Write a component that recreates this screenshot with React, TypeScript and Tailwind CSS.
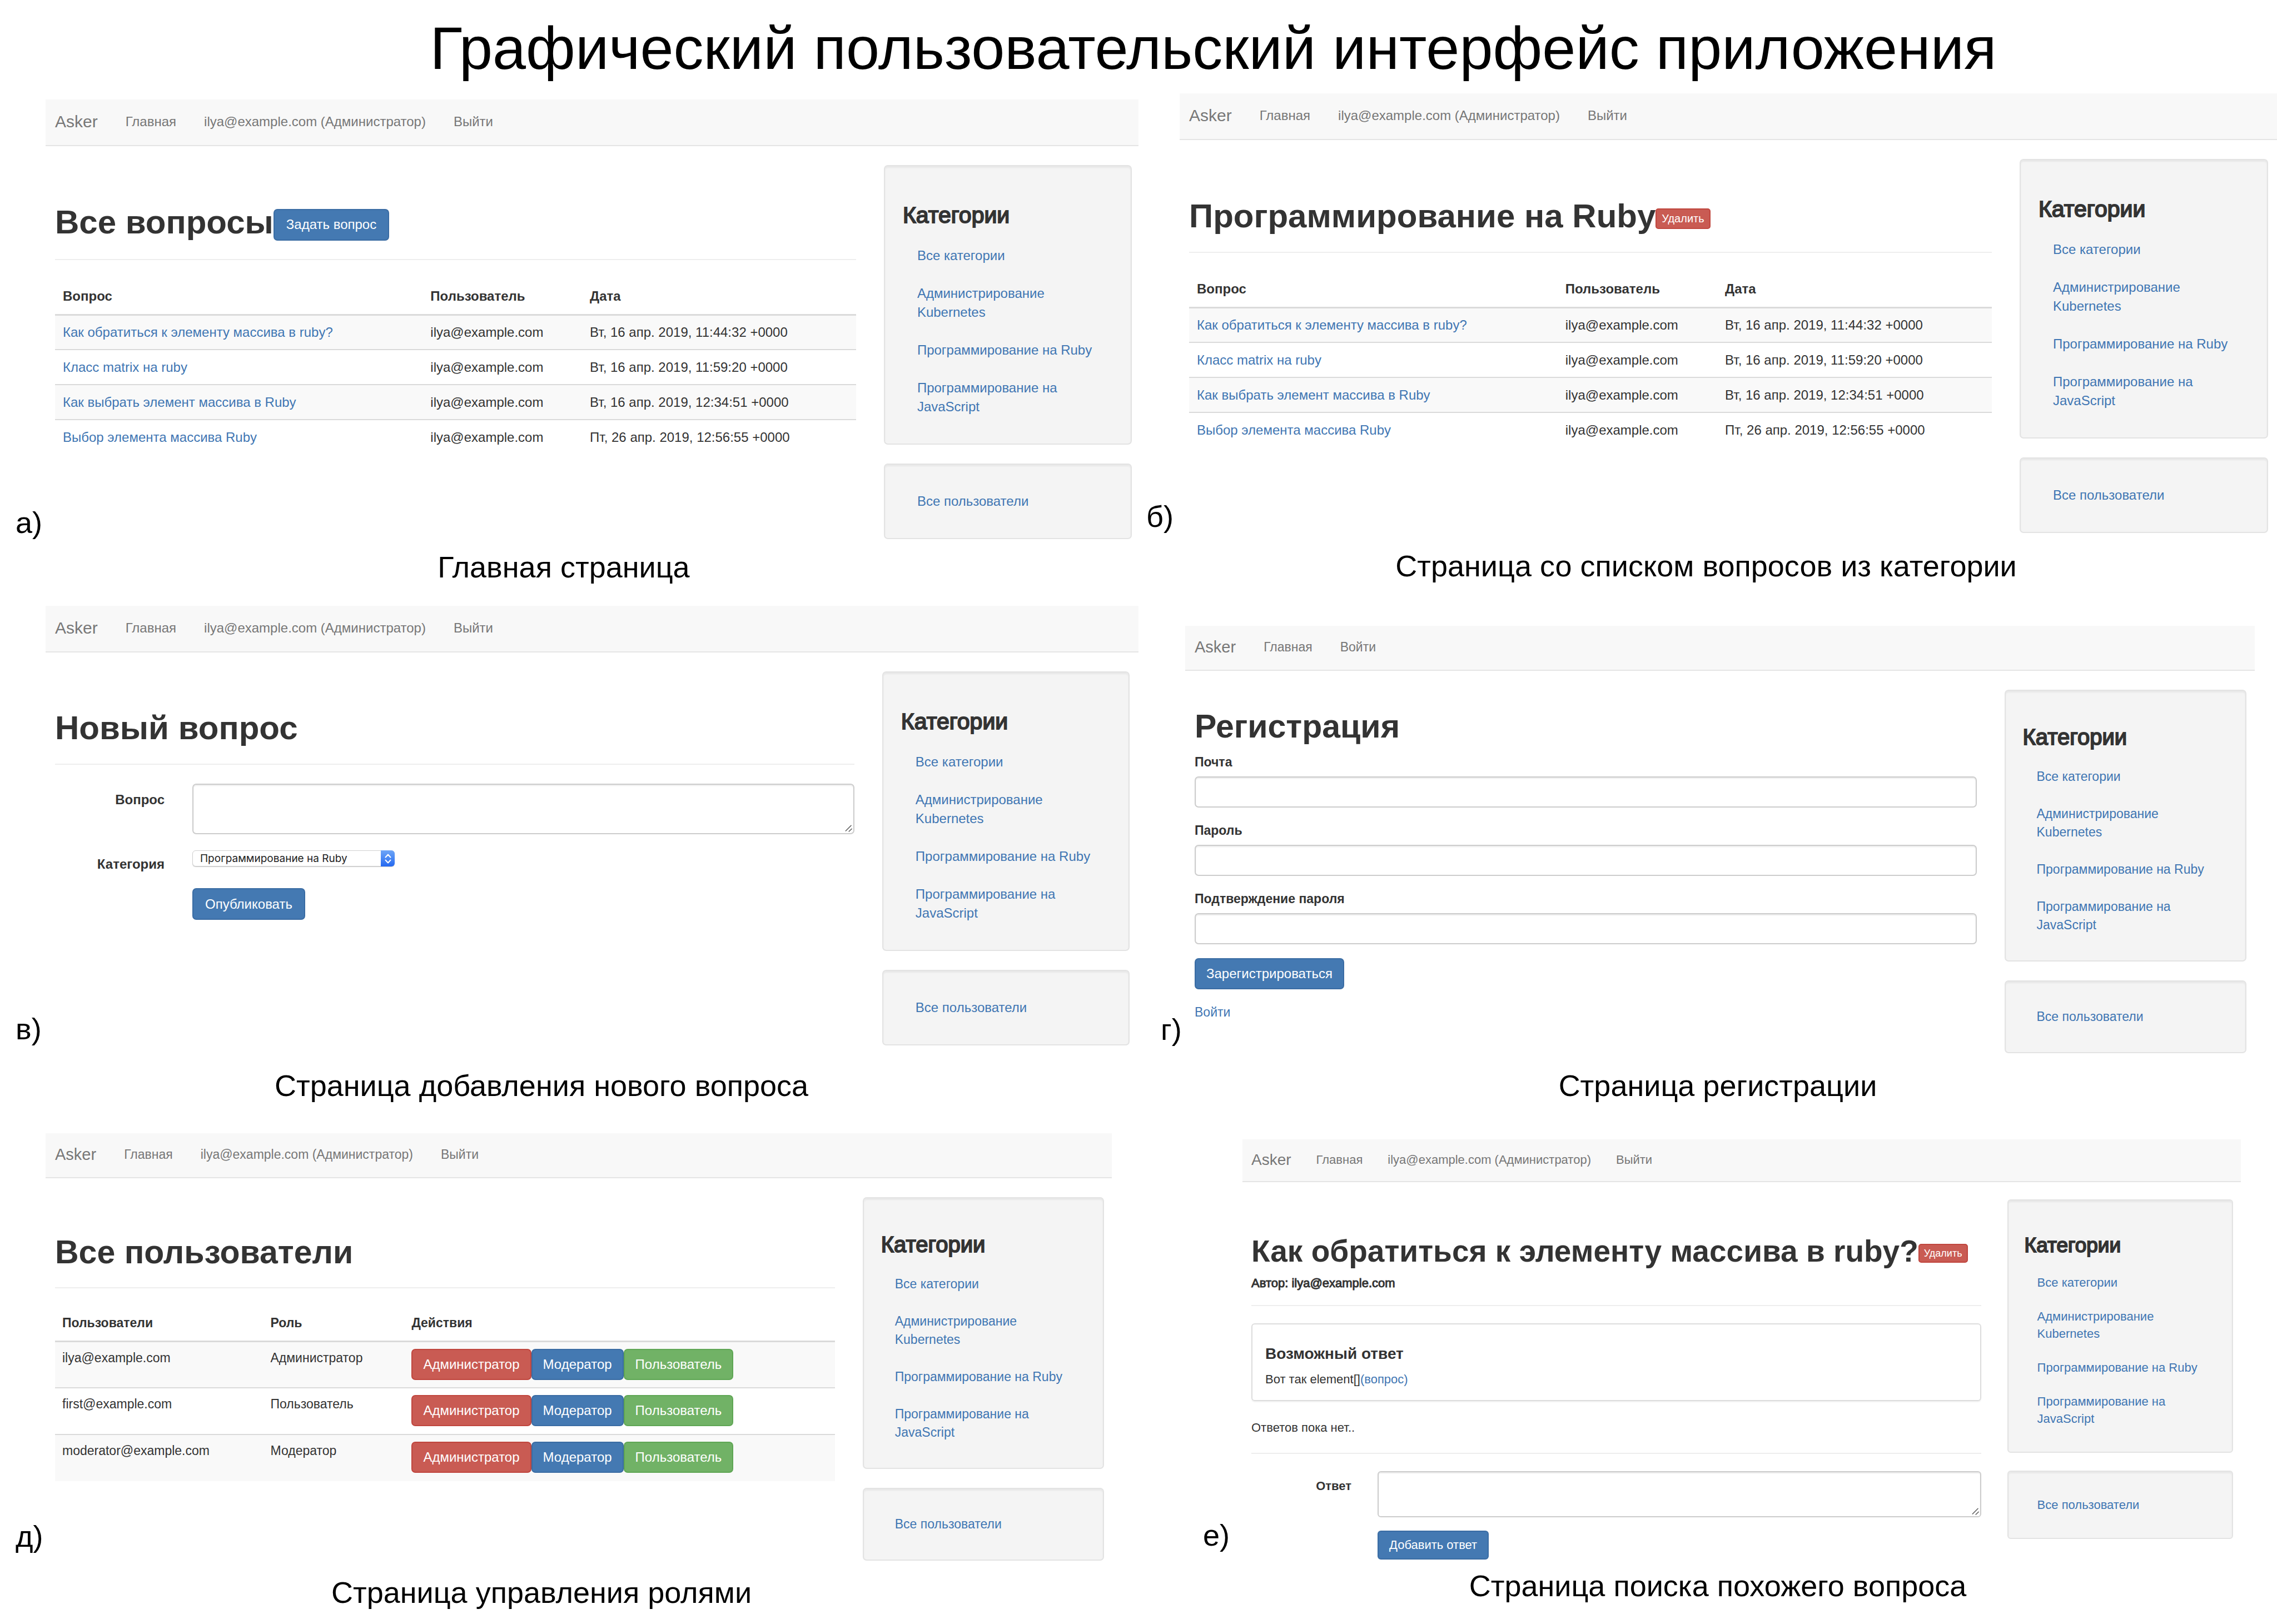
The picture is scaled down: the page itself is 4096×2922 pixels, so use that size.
import React, { createContext, useContext, useId } from "react";

type Size = "lg" | "md" | "sm";

const sizes = {
  lg: {
    panel: "text-[24px] leading-[34px]",
    nav: "h-[84px] gap-[50px] pl-[17px] pb-[2px]",
    brand: "text-[30px]",
    body: "mt-[34px] gap-[50px] pl-[17px]",
    side: "gap-[34px]",
    well: "p-[32px] rounded-[7px]",
    sideTitle: "mt-[34px] mb-[16px] text-[41px] leading-[45px]",
    sideLink: "px-[26px] py-[17px]",
    h1: "text-[60px] leading-[68px]",
    btn: "h-[57px] px-[21px] rounded-[7px] text-[24px]",
    btnSm: "h-[37px] px-[9px] rounded-[5px] text-[20px]",
    field: "rounded-[7px]",
  },
  md: {
    panel: "text-[23px] leading-[33px]",
    nav: "h-[81px] gap-[50px] pl-[17px] pb-[2px]",
    brand: "text-[29px]",
    body: "mt-[34px] gap-[50px] pl-[17px]",
    side: "gap-[34px]",
    well: "px-[31px] py-[30px] rounded-[7px]",
    sideTitle: "mt-[32px] mb-[16px] text-[40px] leading-[43px]",
    sideLink: "px-[25px] py-[17px]",
    h1: "text-[59px] leading-[66px]",
    btn: "h-[56px] px-[19px] rounded-[7px] text-[24px]",
    btnSm: "h-[36px] px-[8px] rounded-[5px] text-[20px]",
    field: "rounded-[7px]",
  },
  sm: {
    panel: "text-[22px] leading-[31px]",
    nav: "h-[77px] gap-[45px] pl-[16px] pb-[2px]",
    brand: "text-[28px]",
    body: "mt-[31px] gap-[47px] pl-[16px]",
    side: "gap-[32px]",
    well: "p-[29px] rounded-[6px]",
    sideTitle: "mt-[31px] mb-[16px] text-[37px] leading-[41px]",
    sideLink: "px-[23px] py-[15px]",
    h1: "text-[55px] leading-[62px]",
    btn: "h-[52px] px-[19px] rounded-[6px] text-[22px]",
    btnSm: "h-[34px] px-[8px] rounded-[5px] text-[18px]",
    field: "rounded-[6px]",
  },
};

const SizeContext = createContext<Size>("lg");
const useSize = () => sizes[useContext(SizeContext)];

const tones = {
  primary: "bg-[#4479b2] border-[#3a6ca3]",
  danger: "bg-[#c95b53] border-[#c0463e]",
  success: "bg-[#71b266] border-[#5fa654]",
};

function Button({ tone, small, children }: { tone: keyof typeof tones; small?: boolean; children: string }) {
  const s = useSize();
  return (
    <button
      type="button"
      className={`inline-flex items-center justify-center border-2 align-middle leading-none font-normal whitespace-nowrap text-white ${tones[tone]} ${small ? s.btnSm : s.btn}`}
    >
      {children}
    </button>
  );
}

function Link({ children, className = "" }: { children: string; className?: string }) {
  return (
    <a href="#" className={`text-[#3f76b3] ${className}`}>
      {children}
    </a>
  );
}

function Heading({ children, action }: { children: string; action?: React.ReactNode }) {
  const s = useSize();
  return (
    <h2 className={`font-bold whitespace-nowrap text-[#333] ${s.h1}`}>
      {children}
      {action}
    </h2>
  );
}

function Well({ children }: { children: React.ReactNode }) {
  const s = useSize();
  return (
    <div className={`border-2 border-[#e3e3e3] bg-[#f4f4f4] shadow-[inset_0_3px_3px_rgba(0,0,0,0.05)] ${s.well}`}>
      {children}
    </div>
  );
}

const categories = ["Все категории", "Администрирование Kubernetes", "Программирование на Ruby", "Программирование на JavaScript"];

function Sidebar() {
  const s = useSize();
  return (
    <aside className={`flex flex-col ${s.side}`}>
      <Well>
        <h3 className={`text-[#333] [-webkit-text-stroke:2px_#333] ${s.sideTitle}`}>Категории</h3>
        <ul>
          {categories.map((c) => (
            <li key={c} className={s.sideLink}>
              <Link className="block">{c}</Link>
            </li>
          ))}
        </ul>
      </Well>
      <Well>
        <div className={s.sideLink}>
          <Link className="block">Все пользователи</Link>
        </div>
      </Well>
    </aside>
  );
}

function Screen({
  size,
  nav,
  bodyClass,
  mainClass,
  children,
}: {
  size: Size;
  nav: string[];
  bodyClass: string;
  mainClass: string;
  children: React.ReactNode;
}) {
  const s = sizes[size];
  return (
    <SizeContext.Provider value={size}>
      <div className={`min-w-0 flex-1 text-[#333] ${s.panel}`}>
        <nav className={`flex items-center border-b-2 border-[#e5e5e5] bg-[#f8f8f8] whitespace-nowrap text-[#777] ${s.nav}`}>
          <a href="#" className={s.brand}>
            Asker
          </a>
          {nav.map((n) => (
            <a href="#" key={n}>
              {n}
            </a>
          ))}
        </nav>
        <div className={`grid grid-cols-[minmax(0,3.23fr)_minmax(0,1fr)] items-start ${s.body} ${bodyClass}`}>
          <main className={mainClass}>{children}</main>
          <Sidebar />
        </div>
      </div>
    </SizeContext.Provider>
  );
}

function Figure({
  mark,
  caption,
  className,
  markClass,
  captionClass,
  children,
}: {
  mark: string;
  caption: string;
  className: string;
  markClass: string;
  captionClass: string;
  children: React.ReactNode;
}) {
  return (
    <figure className={`text-[54px] leading-[60px] text-black ${className}`}>
      <div className="flex">
        <span className={`shrink-0 self-end ${markClass}`}>{mark}</span>
        {children}
      </div>
      <figcaption className={`text-center ${captionClass}`}>{caption}</figcaption>
    </figure>
  );
}

const questions = [
  ["Как обратиться к элементу массива в ruby?", "Вт, 16 апр. 2019, 11:44:32 +0000"],
  ["Класс matrix на ruby", "Вт, 16 апр. 2019, 11:59:20 +0000"],
  ["Как выбрать элемент массива в Ruby", "Вт, 16 апр. 2019, 12:34:51 +0000"],
  ["Выбор элемента массива Ruby", "Пт, 26 апр. 2019, 12:56:55 +0000"],
];

function QuestionTable() {
  return (
    <table className="mt-[34px] w-full table-fixed border-collapse text-left">
      <thead>
        <tr className="h-[64px] border-b-[3px] border-[#dadada]">
          <th className="w-[45.9%] px-[14px] font-bold">Вопрос</th>
          <th className="w-[19.9%] px-[14px] font-bold">Пользователь</th>
          <th className="px-[14px] font-bold">Дата</th>
        </tr>
      </thead>
      <tbody>
        {questions.map(([q, date]) => (
          <tr key={q} className="h-[63px] border-b-2 border-[#dadada] last:border-b-0 odd:bg-[#f9f9f9]">
            <td className="px-[14px]">
              <Link>{q}</Link>
            </td>
            <td className="px-[14px]">ilya@example.com</td>
            <td className="px-[14px]">{date}</td>
          </tr>
        ))}
      </tbody>
    </table>
  );
}

const users = [
  ["ilya@example.com", "Администратор"],
  ["first@example.com", "Пользователь"],
  ["moderator@example.com", "Модератор"],
];

function UserTable() {
  return (
    <table className="mt-[32px] w-full table-fixed border-collapse text-left">
      <thead>
        <tr className="h-[63px] border-b-[3px] border-[#dadada]">
          <th className="w-[26.7%] px-[13px] font-bold">Пользователи</th>
          <th className="w-[18.1%] px-[13px] font-bold">Роль</th>
          <th className="px-[13px] font-bold">Действия</th>
        </tr>
      </thead>
      <tbody>
        {users.map(([mail, role]) => (
          <tr key={mail} className="h-[84px] border-b-2 border-[#dadada] align-top last:border-b-0 odd:bg-[#f9f9f9]">
            <td className="px-[13px] pt-[12px]">{mail}</td>
            <td className="px-[13px] pt-[12px]">{role}</td>
            <td className="px-[13px] pt-[12px]">
              <div className="flex">
                <Button tone="danger">Администратор</Button>
                <Button tone="primary">Модератор</Button>
                <Button tone="success">Пользователь</Button>
              </div>
            </td>
          </tr>
        ))}
      </tbody>
    </table>
  );
}

const fieldBox = "w-full border-2 border-[#cccccc] bg-white shadow-[inset_0_2px_2px_rgba(0,0,0,0.075)] outline-none";

function TextArea({ id, className }: { id: string; className: string }) {
  const s = useSize();
  return (
    <div className="relative flex-1">
      <textarea id={id} className={`block resize-none ${fieldBox} ${s.field} ${className}`} />
      <svg viewBox="0 0 20 20" className="absolute right-[4px] bottom-[4px] size-[13px]" aria-hidden="true">
        <path d="M2 17 L17 2 M11 18.6 L18.7 11.3" stroke="#555" strokeWidth="2.2" strokeLinecap="round" fill="none" />
      </svg>
    </div>
  );
}

function QuestionForm() {
  const text = useId();
  const cat = useId();
  return (
    <form className="mt-[34px]">
      <div className="flex">
        <label htmlFor={text} className="w-[247px] shrink-0 pt-[12px] pr-[50px] text-right font-bold">
          Вопрос
        </label>
        <TextArea id={text} className="h-[91px]" />
      </div>
      <div className="mt-[25px] flex items-start">
        <label htmlFor={cat} className="w-[247px] shrink-0 pt-[12px] pr-[50px] text-right font-bold">
          Категория
        </label>
        <div className="relative mt-[4px] h-[29px] w-[364px]">
          <select
            id={cat}
            className="block h-full w-full appearance-none rounded-[6px] border border-[#d0d0d0] bg-white pl-[13px] font-['Inter','DejaVu_Sans',sans-serif] text-[19px] leading-[26px] text-[#222] shadow-[0_1px_1px_rgba(0,0,0,0.2)]"
          >
            <option>Программирование на Ruby</option>
          </select>
          <span className="pointer-events-none absolute inset-y-0 right-0 flex w-[25px] items-center justify-center rounded-r-[6px] bg-linear-to-b from-[#6ea5f7] to-[#2468f0]">
            <svg viewBox="0 0 12 20" className="h-[20px] w-[12px]" aria-hidden="true">
              <path d="M1.5 7.5 L6 2.5 L10.5 7.5 M1.5 12.5 L6 17.5 L10.5 12.5" stroke="#fff" strokeWidth="2" fill="none" strokeLinecap="round" strokeLinejoin="round" />
            </svg>
          </span>
        </div>
      </div>
      <div className="mt-[26px] flex pl-[247px]">
        <Button tone="primary">Опубликовать</Button>
      </div>
    </form>
  );
}

function RegistrationForm() {
  const s = useSize();
  const base = useId();
  return (
    <form>
      {["Почта", "Пароль", "Подтверждение пароля"].map((name, i) => (
        <div key={name} className="mb-[25px] flex flex-col gap-[9px]">
          <label htmlFor={base + i} className="font-bold">
            {name}
          </label>
          <input id={base + i} type={i ? "password" : "email"} className={`h-[56px] px-[20px] ${fieldBox} ${s.field}`} />
        </div>
      ))}
      <Button tone="primary">Зарегистрироваться</Button>
      <p className="mt-[25px]">
        <Link>Войти</Link>
      </p>
    </form>
  );
}

function AnswerForm() {
  const id = useId();
  return (
    <form className="mt-[31px]">
      <div className="flex">
        <label htmlFor={id} className="w-[227px] shrink-0 pt-[11px] pr-[47px] text-right font-bold">
          Ответ
        </label>
        <TextArea id={id} className="h-[83px]" />
      </div>
      <div className="mt-[24px] flex pl-[227px]">
        <Button tone="primary">Добавить ответ</Button>
      </div>
    </form>
  );
}

const adminNav = ["Главная", "ilya@example.com (Администратор)", "Выйти"];
const rule = "border-[#eeeeee] border-t-2";

export default function App() {
  return (
    <div className="min-h-screen w-full overflow-hidden bg-white font-['Liberation_Sans',Arial,sans-serif]">
      <h1 className="pt-[27px] pl-[269px] text-center text-[108px] leading-[120px] whitespace-nowrap text-black">
        Графический пользовательский интерфейс приложения
      </h1>
      <div className="grid grid-cols-2 items-start">
        <Figure mark="а)" caption="Главная страница" className="pt-[32px]" markClass="w-[82px] pl-[28px]" captionClass="pt-[20px] pr-[20px]">
          <Screen size="lg" nav={adminNav} bodyClass="pr-[12px]" mainClass="pt-[69px]">
            <Heading action={<Button tone="primary">Задать вопрос</Button>}>Все вопросы</Heading>
            <hr className={`mt-[32px] ${rule}`} />
            <QuestionTable />
          </Screen>
        </Figure>

        <Figure mark="б)" caption="Страница со списком вопросов из категории" className="pt-[21px]" markClass="w-[74px] pl-[14px]" captionClass="pt-[29px] pr-[6px]">
          <Screen size="lg" nav={adminNav} bodyClass="pr-[16px]" mainClass="pt-[69px]">
            <Heading action={<Button tone="danger" small>Удалить</Button>}>Программирование на Ruby</Heading>
            <hr className={`mt-[30px] ${rule}`} />
            <QuestionTable />
          </Screen>
        </Figure>

        <Figure mark="в)" caption="Страница добавления нового вопроса" className="pt-[40px]" markClass="w-[82px] pl-[28px]" captionClass="pt-[42px] pr-[100px]">
          <Screen size="lg" nav={adminNav} bodyClass="pr-[16px]" mainClass="pt-[68px]">
            <Heading>Новый вопрос</Heading>
            <hr className={`mt-[30px] ${rule}`} />
            <QuestionForm />
          </Screen>
        </Figure>

        <Figure mark="г)" caption="Страница регистрации" className="pt-[76px] pr-[40px]" markClass="w-[84px] pl-[40px] pb-[13px]" captionClass="pt-[28px] pl-[76px]">
          <Screen size="md" nav={["Главная", "Войти"]} bodyClass="pr-[15px]" mainClass="pt-[33px]">
            <Heading>Регистрация</Heading>
            <div className="mt-[15px]">
              <RegistrationForm />
            </div>
          </Screen>
        </Figure>

        <Figure mark="д)" caption="Страница управления ролями" className="pt-[56px] pr-[48px]" markClass="w-[82px] pl-[28px] pb-[14px]" captionClass="pt-[27px] pr-[52px]">
          <Screen size="md" nav={adminNav} bodyClass="pr-[14px]" mainClass="pt-[66px]">
            <Heading>Все пользователи</Heading>
            <hr className={`mt-[30px] ${rule}`} />
            <UserTable />
          </Screen>
        </Figure>

        <Figure mark="е)" caption="Страница поиска похожего вопроса" className="pt-[67px] pr-[65px]" markClass="w-[187px] pl-[116px] pb-[14px]" captionClass="pt-[17px] pl-[101px]">
          <Screen size="sm" nav={adminNav} bodyClass="pr-[14px]" mainClass="pt-[62px]">
            <Heading action={<Button tone="danger" small>Удалить</Button>}>Как обратиться к элементу массива в ruby?</Heading>
            <p className="mt-[11px] [-webkit-text-stroke:1px_#333]">Автор: ilya@example.com</p>
            <hr className={`mt-[24px] ${rule}`} />
            <section className="mt-[31px] h-[140px] rounded-[6px] border-2 border-[#dddddd] px-[23px] pt-[36px] shadow-[0_2px_2px_rgba(0,0,0,0.05)]">
              <h3 className="text-[28px] leading-[34px] font-bold">Возможный ответ</h3>
              <p className="mt-[13px]">
                Вот так element[]<Link>(вопрос)</Link>
              </p>
            </section>
            <p className="mt-[32px]">Ответов пока нет..</p>
            <hr className={`mt-[30px] ${rule}`} />
            <AnswerForm />
          </Screen>
        </Figure>
      </div>
    </div>
  );
}
